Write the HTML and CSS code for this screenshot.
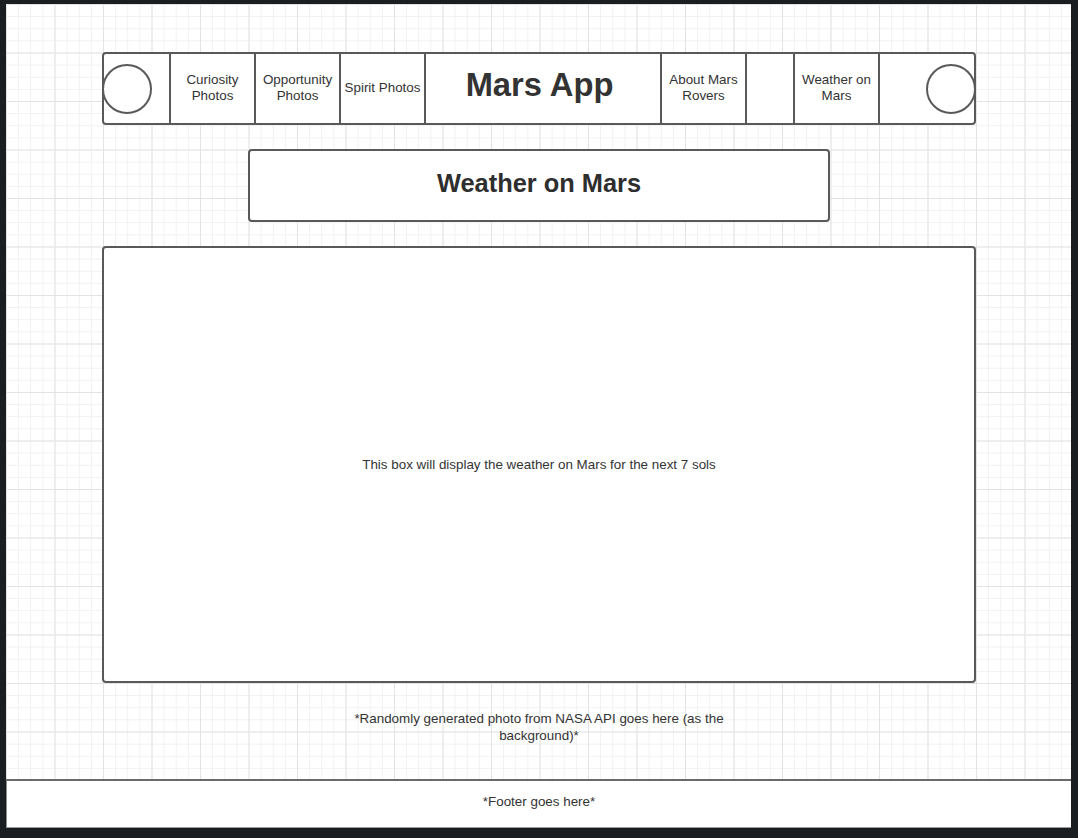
FILE: index.html
```html
<!DOCTYPE html>
<html lang="en">
<head>
<meta charset="utf-8">
<title>Mars App Wireframe</title>
<link rel="stylesheet" href="styles.css">
</head>
<body>
<div class="canvas">
  <nav class="nav">
    <div class="cell cell-logo"><span class="circle circle-left"></span></div>
    <div class="cell cell-link">Curiosity<br>Photos</div>
    <div class="cell cell-link">Opportunity<br>Photos</div>
    <div class="cell cell-link">Spirit Photos</div>
    <div class="cell cell-title">Mars App</div>
    <div class="cell cell-link">About Mars<br>Rovers</div>
    <div class="cell cell-blank"></div>
    <div class="cell cell-link">Weather on<br>Mars</div>
    <div class="cell cell-end"><span class="circle circle-right"></span></div>
  </nav>
  <div class="heading-box"><h1 class="heading">Weather on Mars</h1></div>
  <main class="main-box">This box will display the weather on Mars for the next 7 sols</main>
  <p class="note">*Randomly generated photo from NASA API goes here (as the background)*</p>
  <footer class="footer">*Footer goes here*</footer>
</div>
</body>
</html>
```

FILE: styles.css
```css
* { box-sizing: border-box; }
html, body { height: 100%; }
body {
  margin: 0;
  background: #1b1e21;
  font-family: "Liberation Sans", Arial, sans-serif;
  color: #333;
  padding: 4px 7px 10px 6px;
}
.canvas {
  height: 824px;
  display: flex;
  flex-direction: column;
  align-items: center;
  padding-left: 1px;
  background-color: #fff;
  background-image:
    linear-gradient(to right, #e3e3e3 1px, transparent 1px),
    linear-gradient(to bottom, #e3e3e3 1px, transparent 1px),
    linear-gradient(to right, #f1f1f1 1px, transparent 1px),
    linear-gradient(to bottom, #f1f1f1 1px, transparent 1px);
  background-size: 48.5px 48.5px, 48.5px 48.5px, 12.125px 12.125px, 12.125px 12.125px;
  background-position: 0 0;
}
.nav {
  margin-top: 48px;
  width: 874px;
  height: 73px;
  display: flex;
  border: 2px solid #595959;
  border-radius: 4px;
  background: #fff;
}
.cell {
  display: flex;
  align-items: center;
  justify-content: center;
  text-align: center;
  border-left: 2px solid #595959;
  font-size: 13.4px;
  line-height: 16px;
  padding-bottom: 2px;
}
.cell-logo { width: 65px; border-left: 0; justify-content: flex-start; padding-bottom: 0; }
.cell-link { width: 85px; }
.cell-title { width: 236px; font-size: 32.7px; font-weight: bold; line-height: 36px; padding-bottom: 7px; padding-right: 7px; }
.cell-blank { width: 48px; }
.cell-end { width: 96px; justify-content: flex-end; padding-bottom: 0; }
.circle {
  width: 50px;
  height: 50px;
  border: 2px solid #595959;
  border-radius: 50%;
  background: #fff;
  flex: none;
}
.circle-left { margin-left: -2px; }
.circle-right { margin-right: -2px; }
.heading-box {
  margin-top: 24px;
  width: 582px;
  height: 73px;
  border: 2px solid #595959;
  border-radius: 4px;
  background: #fff;
  display: flex;
  align-items: center;
  justify-content: center;
  padding-bottom: 4px;
}
.heading {
  margin: 0;
  font-size: 25.4px;
  font-weight: bold;
  color: #2e2e2e;
}
.main-box {
  margin-top: 24px;
  width: 874px;
  height: 437px;
  border: 2px solid #595959;
  border-radius: 4px;
  background: #fff;
  display: flex;
  align-items: center;
  justify-content: center;
  font-size: 13.4px;
}
.note {
  margin: 27px 0 0;
  width: 390px;
  text-align: center;
  font-size: 13.4px;
  line-height: 17px;
}
.footer {
  margin-top: auto;
  margin-left: -1px;
  width: calc(100% + 1px);
  height: 49px;
  background: #fff;
  border-top: 2px solid #6a6a6a;
  border-left: 1px solid #8a8a8a;
  border-bottom: 1px solid #9a9a9a;
  display: flex;
  align-items: center;
  justify-content: center;
  font-size: 13.4px;
  padding-bottom: 6px;
}
```
